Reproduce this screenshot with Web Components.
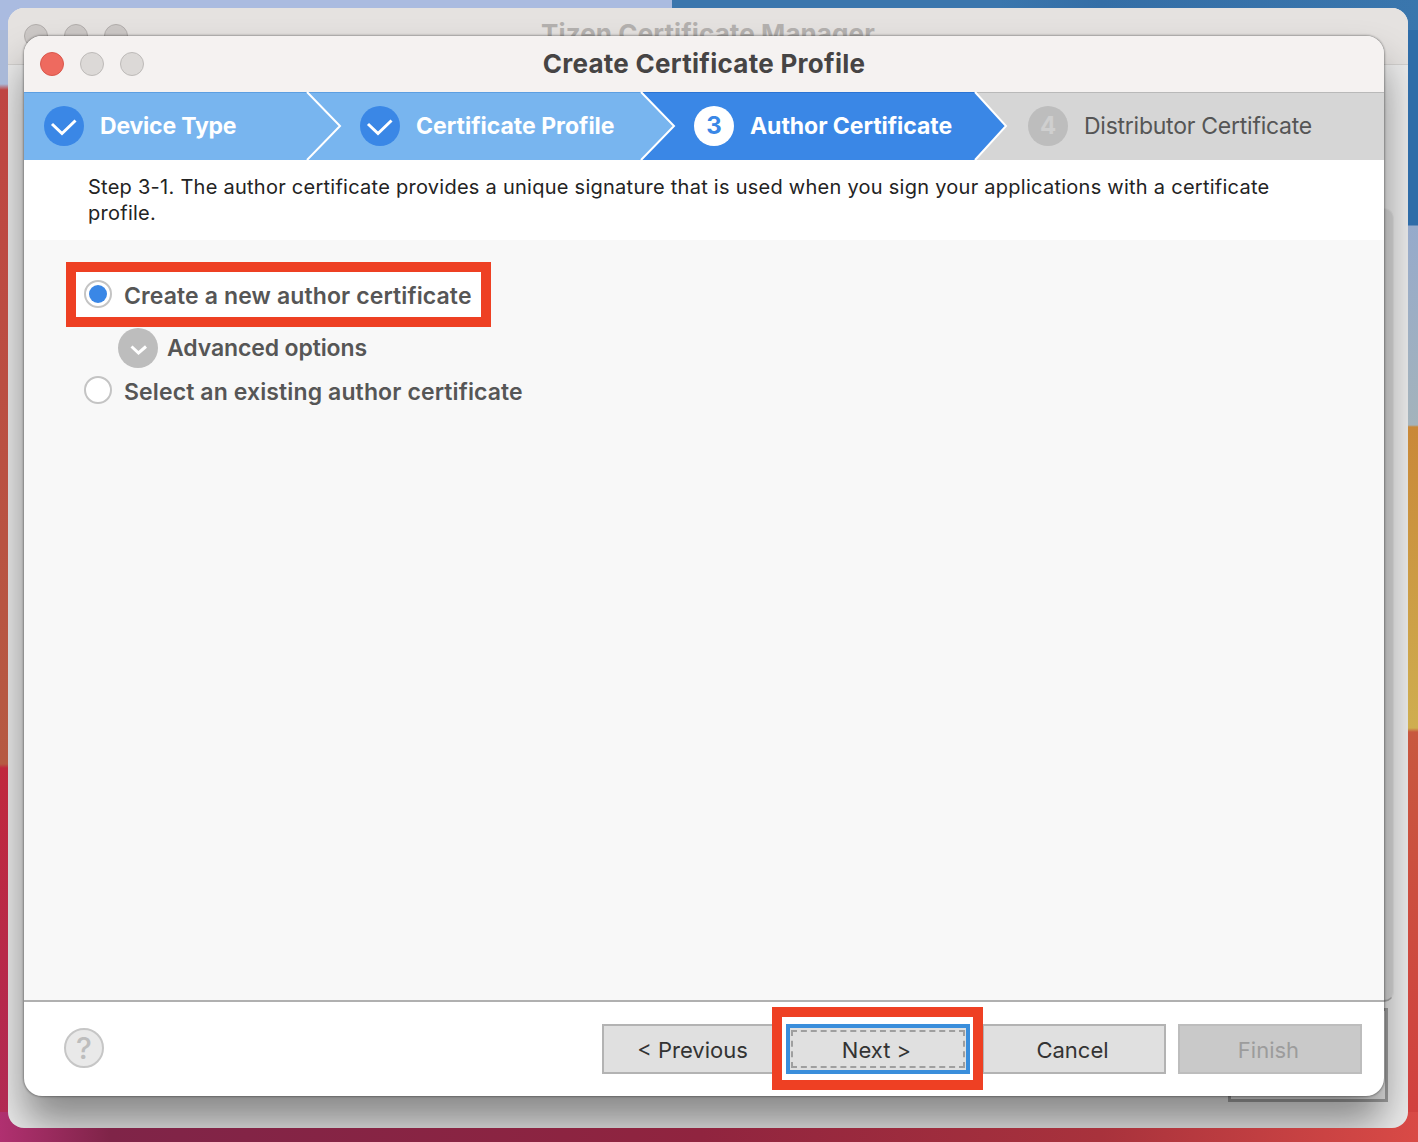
<!DOCTYPE html>
<html>
<head>
<meta charset="utf-8">
<title>Create Certificate Profile</title>
<style>
  html, body { margin: 0; padding: 0; }
  body { font-family: Inter, "Liberation Sans", sans-serif; }
</style>
</head>
<body>
<mac-desktop>
  <back-window title="Tizen Certificate Manager">
    <profile-dialog title="Create Certificate Profile">
      <step-bar slot="steps">
        <step-item state="done" width="283" pad="20" layer="5" reach="33" style="letter-spacing:-.2px">Device Type</step-item>
        <step-item state="done" width="334" pad="53" layer="4" reach="33" style="letter-spacing:0">Certificate Profile</step-item>
        <step-item state="current" num="3" width="334" pad="53" layer="3" reach="31">Author Certificate</step-item>
        <step-item state="todo" num="4" pad="53" layer="0">Distributor Certificate</step-item>
      </step-bar>
      <step-note slot="note">Step 3-1. The author certificate provides a unique signature that is used when you sign your applications with a certificate profile.</step-note>
      <red-mark slot="body" style="left:42px;top:22px;width:425px;height:65px"></red-mark>
      <radio-option slot="body" checked>Create a new author certificate</radio-option>
      <advanced-toggle slot="body">Advanced options</advanced-toggle>
      <radio-option slot="body" style="margin-top:8px">Select an existing author certificate</radio-option>
      <help-button slot="footer"></help-button>
      <red-mark slot="footer" style="left:748px;top:5px;width:211px;height:83px"></red-mark>
      <wizard-button slot="footer">&lt; Previous</wizard-button>
      <wizard-button slot="footer" focused>Next &gt;</wizard-button>
      <wizard-button slot="footer" style="margin-left:12px">Cancel</wizard-button>
      <wizard-button slot="footer" disabled style="margin-left:12px">Finish</wizard-button>
    </profile-dialog>
  </back-window>
</mac-desktop>

<script>
class MacDesktop extends HTMLElement {
  constructor() {
    super();
    this.attachShadow({ mode: 'open' }).innerHTML = `
    <style>
    :host {
      display: block;
      position: relative;
      width: 1418px;
      height: 1142px;
      overflow: hidden;
      background-color: #b9433f;
      background-image:
        linear-gradient(90deg, #aabbe0 0, #aabbe0 672px, #3a76ad 672px, #3a76ad 1000px, #346ea6 1100px, #3a76ad 1418px),
        linear-gradient(90deg, #b03070 0, #7f2448 110px, #90243f 700px, #a8323c 1100px, #d94a46 1418px),
        linear-gradient(180deg, #a9b9d8 0, #a9b9d8 84px, #bf4542 90px, #b65a42 764px, #c0283d 768px, #b02a55 1142px),
        linear-gradient(180deg, #2e6ca8 0, #2e6ca8 225px, #96aacb 226px, #a4b3bb 425px, #c98838 427px, #cfae50 728px, #c8583f 732px, #d23f3f 1142px);
      background-size: 100% 30px, 100% 30px, 30px 100%, 30px 100%;
      background-position: 0 0, 0 100%, 0 0, 100% 0;
      background-repeat: no-repeat;
    }
    </style>
    <slot></slot>`;
  }
}

class BackWindow extends HTMLElement {
  constructor() {
    super();
    this.attachShadow({ mode: 'open' }).innerHTML = `
    <style>
    :host {
      display: block;
      position: absolute;
      left: 8px;
      top: 8px;
      width: 1400px;
      height: 1120px;
      border-radius: 16px;
      overflow: hidden;
      background: #ebebeb;
    }
    .bar {
      height: 57px;
      box-sizing: border-box;
      background: #e5e2e0;
      border-bottom: 1px solid #d2d0ce;
      text-align: center;
      font: 700 26px/1 Inter, "Liberation Sans", sans-serif;
      letter-spacing: .1px;
      color: #b4b1af;
      padding-top: 13px;
    }
    .light {
      position: absolute;
      top: 16px;
      width: 22px;
      height: 22px;
      border-radius: 50%;
      background: #ccc8c6;
      border: 1px solid #b1adab;
    }
    .panel {
      position: absolute;
      left: 1340px;
      top: 200px;
      width: 46px;
      height: 794px;
      box-sizing: border-box;
      border-radius: 10px;
      background: #d8d8d8;
      border: 1px solid #e2e2e2;
      border-bottom: 2px solid #aaa;
    }
    .behind {
      position: absolute;
      left: 1220px;
      top: 1000px;
      width: 160px;
      height: 94px;
      box-sizing: border-box;
      border: 3px solid #a2a2a2;
    }
    </style>
    <div class="bar"></div>
    <i class="light" style="left:16px"></i>
    <i class="light" style="left:56px"></i>
    <i class="light" style="left:96px"></i>
    <div class="panel"></div>
    <div class="behind"></div>
    <slot></slot>`;
    this.shadowRoot.querySelector('.bar').textContent = this.getAttribute('title');
  }
}

class ProfileDialog extends HTMLElement {
  constructor() {
    super();
    this.attachShadow({ mode: 'open' }).innerHTML = `
    <style>
    :host {
      display: flex;
      flex-direction: column;
      position: absolute;
      left: 16px;
      top: 28px;
      width: 1360px;
      height: 1060px;
      border-radius: 18px;
      overflow: hidden;
      background: #fff;
      box-shadow: 0 28px 40px rgba(0, 0, 0, .42), 0 0 2px 1px rgba(0, 0, 0, .3);
    }
    .head {
      height: 56px;
      flex: none;
      display: flex;
      align-items: center;
      position: relative;
      background: #f5f2f1;
    }
    .lights {
      display: flex;
      gap: 16px;
      padding-left: 16px;
    }
    .lights i {
      width: 22px;
      height: 22px;
      border-radius: 50%;
      background: #dcd9d7;
      border: 1px solid #bdbab8;
    }
    .lights i:first-child {
      background: #ee6a5f;
      border-color: #d9574c;
    }
    .title {
      position: absolute;
      left: 0;
      right: 0;
      text-align: center;
      font: 700 26px/1 Inter, "Liberation Sans", sans-serif;
      letter-spacing: .28px;
      color: #464444;
    }
    .body {
      flex: 1;
      position: relative;
      display: flex;
      flex-direction: column;
      align-items: flex-start;
      box-sizing: border-box;
      padding: 40px 0 0 60px;
      background: #f8f8f8;
      border-bottom: 2px solid #b0b0b0;
    }
    .foot {
      height: 94px;
      flex: none;
      position: relative;
      display: flex;
      align-items: flex-start;
      box-sizing: border-box;
      padding: 22px 22px 0 40px;
    }
    </style>
    <div class="head">
      <div class="lights"><i></i><i></i><i></i></div>
      <div class="title"></div>
    </div>
    <slot name="steps"></slot>
    <slot name="note"></slot>
    <div class="body"><slot name="body"></slot></div>
    <div class="foot"><slot name="footer"></slot></div>`;
    this.shadowRoot.querySelector('.title').textContent = this.getAttribute('title');
  }
}

class StepBar extends HTMLElement {
  constructor() {
    super();
    this.attachShadow({ mode: 'open' }).innerHTML = `
    <style>
    :host {
      display: flex;
      height: 68px;
      flex: none;
      background: #d6d6d6;
    }
    </style>
    <slot></slot>`;
  }
}

const STEP_COLORS = {
  done: { bg: '#78b5ef', top: '#5c9fe2', text: '#fff', weight: 700, track: '-.1px' },
  current: { bg: '#3a87e6', top: '#2a74d4', text: '#fff', weight: 700, track: '-.05px' },
  todo: { bg: '#d6d6d6', top: '#b9b9b9', text: '#555', weight: 400, track: '-.25px' },
};

class StepItem extends HTMLElement {
  constructor() {
    super();
    const state = this.getAttribute('state');
    const c = STEP_COLORS[state];
    const width = this.getAttribute('width');
    const num = this.getAttribute('num');
    const reach = this.getAttribute('reach');
    const badge = state === 'done'
      ? '<svg width="40" height="40" viewBox="0 0 40 40"><path d="M8 18 18 27.5 31.5 14.5" fill="none" stroke="#fff" stroke-width="3"/></svg>'
      : num;
    const tip = state === 'todo' ? '' : `
    <svg class="tip" width="36" height="68" viewBox="0 0 36 68">
      <path d="M0 0 ${reach} 34 0 68Z" fill="${c.bg}"/>
      <path d="M0 0 ${reach} 34 0 68" fill="none" stroke="#fff" stroke-width="2"/>
    </svg>`;
    this.attachShadow({ mode: 'open' }).innerHTML = `
    <style>
    :host {
      display: flex;
      align-items: center;
      position: relative;
      box-sizing: border-box;
      height: 68px;
      gap: 16px;
      padding-left: ${this.getAttribute('pad')}px;
      ${width ? `width: ${width}px; flex: none;` : 'flex: 1;'}
      z-index: ${this.getAttribute('layer')};
      background: ${c.bg};
      box-shadow: inset 0 1px 0 ${c.top};
      font: ${c.weight} 23px/1 Inter, "Liberation Sans", sans-serif;
      letter-spacing: ${c.track};
      color: ${c.text};
    }
    .badge {
      width: 40px;
      height: 40px;
      flex: none;
      border-radius: 50%;
      display: flex;
      align-items: center;
      justify-content: center;
      font-weight: 700;
      font-size: 24px;
      background: ${state === 'done' ? '#3a87e6' : state === 'current' ? '#fff' : '#bdbdbd'};
      color: ${state === 'current' ? '#3a87e6' : '#cfcfcf'};
    }
    .tip {
      position: absolute;
      right: -36px;
      top: 0;
      overflow: visible;
    }
    </style>
    <span class="badge">${badge}</span><slot></slot>${tip}`;
  }
}

class StepNote extends HTMLElement {
  constructor() {
    super();
    this.attachShadow({ mode: 'open' }).innerHTML = `
    <style>
    :host {
      display: block;
      height: 80px;
      flex: none;
      box-sizing: border-box;
      padding: 14px 110px 0 64px;
      background: #fff;
      font: 400 20px/26px Inter, "Liberation Sans", sans-serif;
      letter-spacing: .26px;
      color: #232323;
    }
    </style>
    <slot></slot>`;
  }
}

class RedMark extends HTMLElement {
  constructor() {
    super();
    this.attachShadow({ mode: 'open' }).innerHTML = `
    <style>
    :host {
      display: block;
      position: absolute;
      box-sizing: border-box;
      border: 10px solid #ee4023;
      background: #fff;
      z-index: 1;
    }
    </style>`;
  }
}

class RadioOption extends HTMLElement {
  constructor() {
    super();
    const checked = this.hasAttribute('checked');
    this.attachShadow({ mode: 'open' }).innerHTML = `
    <style>
    :host {
      display: flex;
      align-items: center;
      position: relative;
      z-index: 2;
      height: 28px;
      gap: 12px;
      font: 600 23px/1 Inter, "Liberation Sans", sans-serif;
      letter-spacing: .12px;
      color: #565656;
    }
    .radio {
      width: 28px;
      height: 28px;
      box-sizing: border-box;
      border-radius: 50%;
      border: 2px solid #c4c4c4;
      background: #fff;
      display: flex;
      align-items: center;
      justify-content: center;
    }
    .radio i {
      width: 18px;
      height: 18px;
      border-radius: 50%;
      background: #3a87e6;
    }
    .label { padding-top: 4px; }
    </style>
    <span class="radio">${checked ? '<i></i>' : ''}</span>
    <span class="label"><slot></slot></span>`;
  }
}

class AdvancedToggle extends HTMLElement {
  constructor() {
    super();
    this.attachShadow({ mode: 'open' }).innerHTML = `
    <style>
    :host {
      display: flex;
      align-items: center;
      position: relative;
      z-index: 2;
      margin: 20px 0 0 34px;
      height: 40px;
      gap: 9px;
      font: 600 23px/1 Inter, "Liberation Sans", sans-serif;
      letter-spacing: -.12px;
      color: #565656;
    }
    .round {
      width: 40px;
      height: 40px;
      border-radius: 50%;
      background: #bdbdbd;
      display: flex;
    }
    </style>
    <span class="round">
      <svg width="40" height="40" viewBox="0 0 40 40"><path d="M13.5 18.5 20.5 25 28 18.5" fill="none" stroke="#fff" stroke-width="3"/></svg>
    </span>
    <slot></slot>`;
  }
}

class HelpButton extends HTMLElement {
  constructor() {
    super();
    this.attachShadow({ mode: 'open' }).innerHTML = `
    <style>
    :host {
      display: flex;
      align-items: center;
      justify-content: center;
      box-sizing: border-box;
      width: 40px;
      height: 40px;
      margin: 4px auto 0 0;
      border-radius: 50%;
      border: 2px solid #c6c6c6;
      background: #e9e9e9;
      font: 500 30px/1 Inter, "Liberation Sans", sans-serif;
      color: #bdbdbd;
    }
    </style>
    ?`;
  }
}

class WizardButton extends HTMLElement {
  constructor() {
    super();
    const focused = this.hasAttribute('focused');
    const disabled = this.hasAttribute('disabled');
    this.attachShadow({ mode: 'open' }).innerHTML = `
    <style>
    :host {
      display: flex;
      position: relative;
      z-index: ${focused ? 2 : 0};
      box-sizing: border-box;
      width: 184px;
      height: 50px;
      flex: none;
      border: ${focused ? '4px solid #3a8edb' : `2px solid ${disabled ? '#bdbdbd' : '#b3b3b3'}`};
      background: ${disabled ? '#c9c9c9' : '#e0e0e0'};
      font: 400 22px/1 Inter, "Liberation Sans", sans-serif;
      color: ${disabled ? '#9c9c9c' : '#333'};
    }
    .face {
      flex: 1;
      display: flex;
      align-items: center;
      justify-content: center;
      box-sizing: border-box;
      padding: 2px 3px 0 0;
      ${focused ? 'margin: 2px 1px; border: 2px dashed #9f9f9f;' : ''}
    }
    </style>
    <div class="face"><slot></slot></div>`;
  }
}

customElements.define('mac-desktop', MacDesktop);
customElements.define('back-window', BackWindow);
customElements.define('profile-dialog', ProfileDialog);
customElements.define('step-bar', StepBar);
customElements.define('step-item', StepItem);
customElements.define('step-note', StepNote);
customElements.define('red-mark', RedMark);
customElements.define('radio-option', RadioOption);
customElements.define('advanced-toggle', AdvancedToggle);
customElements.define('help-button', HelpButton);
customElements.define('wizard-button', WizardButton);
</script>
</body>
</html>
